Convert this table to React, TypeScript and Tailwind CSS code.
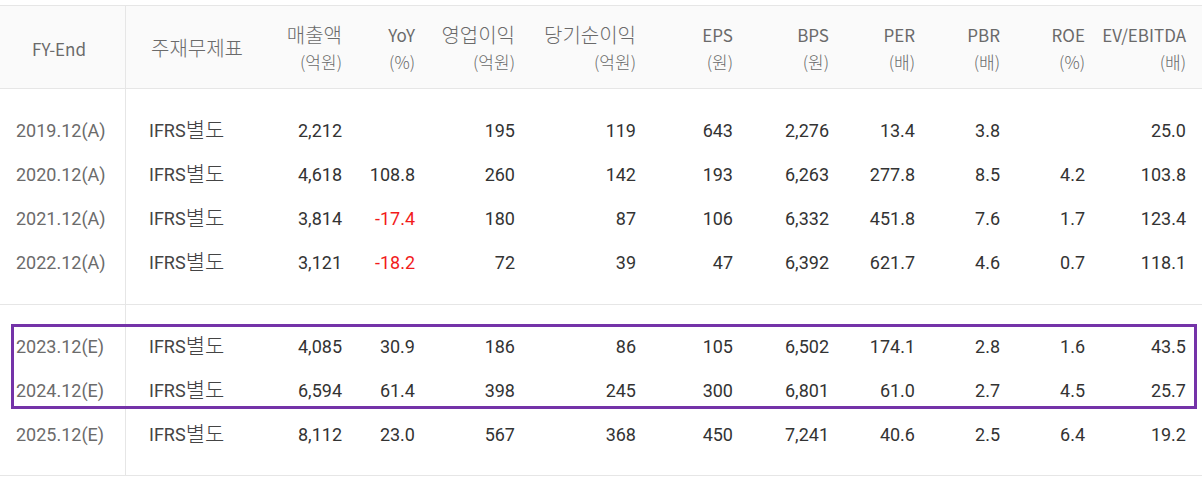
import React from "react";

type Row = {
  period: string;
  values: string[];
};

const HEADERS: { top: string; unit: string; ko?: boolean }[] = [
  { top: "매출액", unit: "(억원)", ko: true },
  { top: "YoY", unit: "(%)" },
  { top: "영업이익", unit: "(억원)", ko: true },
  { top: "당기순이익", unit: "(억원)", ko: true },
  { top: "EPS", unit: "(원)" },
  { top: "BPS", unit: "(원)" },
  { top: "PER", unit: "(배)" },
  { top: "PBR", unit: "(배)" },
  { top: "ROE", unit: "(%)" },
  { top: "EV/EBITDA", unit: "(배)" },
];

const ACTUAL: Row[] = [
  { period: "2019.12(A)", values: ["2,212", "", "195", "119", "643", "2,276", "13.4", "3.8", "", "25.0"] },
  { period: "2020.12(A)", values: ["4,618", "108.8", "260", "142", "193", "6,263", "277.8", "8.5", "4.2", "103.8"] },
  { period: "2021.12(A)", values: ["3,814", "-17.4", "180", "87", "106", "6,332", "451.8", "7.6", "1.7", "123.4"] },
  { period: "2022.12(A)", values: ["3,121", "-18.2", "72", "39", "47", "6,392", "621.7", "4.6", "0.7", "118.1"] },
];

const ESTIMATE: Row[] = [
  { period: "2023.12(E)", values: ["4,085", "30.9", "186", "86", "105", "6,502", "174.1", "2.8", "1.6", "43.5"] },
  { period: "2024.12(E)", values: ["6,594", "61.4", "398", "245", "300", "6,801", "61.0", "2.7", "4.5", "25.7"] },
  { period: "2025.12(E)", values: ["8,112", "23.0", "567", "368", "450", "7,241", "40.6", "2.5", "6.4", "19.2"] },
];

// right part columns: 주재무제표 + 10 numeric columns
const GRID = "grid grid-cols-[124px_92px_73px_100px_121px_97px_96px_86px_85px_85px_101px] pr-4";

function Spacer({ h }: { h: string }) {
  return (
    <div className={`flex ${h}`}>
      <div className="w-[126px] border-r border-[#e6e6e6]" />
    </div>
  );
}

function DataRows({ rows }: { rows: Row[] }) {
  return (
    <div className="flex">
      <div className="w-[126px] shrink-0 border-r border-[#e6e6e6]">
        {rows.map((r) => (
          <div key={r.period} className="flex h-[44px] items-center pl-4 text-[#6b6b6b]">
            {r.period}
          </div>
        ))}
      </div>
      <div className="flex-1">
        {rows.map((r) => (
          <div key={r.period} className={`${GRID} h-[44px] items-center`}>
            <div className="flex items-center pl-[23px] text-[#444]">
              IFRS<span className="text-[21px] leading-none font-light">별도</span>
            </div>
            {r.values.map((v, i) => (
              <div key={i} className={`text-right ${v.startsWith("-") ? "text-[#f21b1b]" : "text-[#333]"}`}>
                {v}
              </div>
            ))}
          </div>
        ))}
      </div>
    </div>
  );
}

export default function App() {
  return (
    <div className="w-[1202px] bg-white pt-[5px] font-[Roboto,'Noto_Sans_CJK_KR',sans-serif] text-[18px]">
      <div className="border-t border-b border-[#e6e6e6] bg-[#fafafa] font-['Noto_Sans_CJK_KR',sans-serif] text-[17px] text-[#6a6a6a]">
        <div className="flex h-[82px]">
          <div className="flex w-[126px] shrink-0 items-center justify-center border-r border-[#e6e6e6] pt-[3px] pr-[7px]">
            FY-End
          </div>
          <div className={`${GRID} flex-1 items-center pt-[2px]`}>
            <div className="pl-[25px] text-[20px] font-light">주재무제표</div>
            {HEADERS.map((h) => (
              <div key={h.top} className="flex flex-col items-end leading-[27px]">
                <span className={h.ko ? "text-[20px] font-light" : ""}>{h.top}</span>
                <span className="font-light">{h.unit}</span>
              </div>
            ))}
          </div>
        </div>
      </div>

      <div className="border-b border-[#e6e6e6]">
        <Spacer h="h-[19px]" />
        <DataRows rows={ACTUAL} />
        <Spacer h="h-[20px]" />
      </div>

      <div className="relative border-b border-[#e6e6e6]">
        <Spacer h="h-[19px]" />
        <DataRows rows={ESTIMATE} />
        <Spacer h="h-[19px]" />
        <div className="pointer-events-none absolute top-[19px] left-[11px] h-[85px] w-[1186px] border-[3px] border-[#7433a8]" />
      </div>
    </div>
  );
}
